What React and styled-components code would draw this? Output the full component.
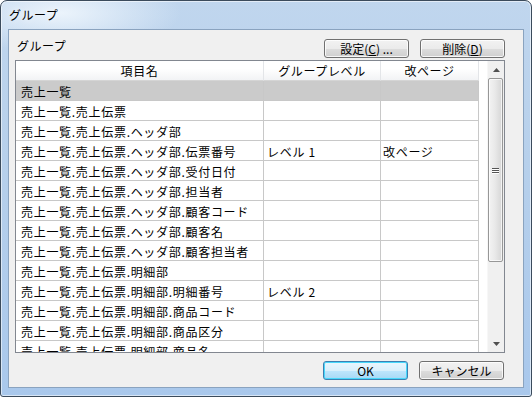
import React from 'react';
import styled, { createGlobalStyle } from 'styled-components';

const rows = [
  { name: '売上一覧', level: '', page: '', selected: true },
  { name: '売上一覧.売上伝票', level: '', page: '' },
  { name: '売上一覧.売上伝票.ヘッダ部', level: '', page: '' },
  { name: '売上一覧.売上伝票.ヘッダ部.伝票番号', level: 'レベル 1', page: '改ページ' },
  { name: '売上一覧.売上伝票.ヘッダ部.受付日付', level: '', page: '' },
  { name: '売上一覧.売上伝票.ヘッダ部.担当者', level: '', page: '' },
  { name: '売上一覧.売上伝票.ヘッダ部.顧客コード', level: '', page: '' },
  { name: '売上一覧.売上伝票.ヘッダ部.顧客名', level: '', page: '' },
  { name: '売上一覧.売上伝票.ヘッダ部.顧客担当者', level: '', page: '' },
  { name: '売上一覧.売上伝票.明細部', level: '', page: '' },
  { name: '売上一覧.売上伝票.明細部.明細番号', level: 'レベル 2', page: '' },
  { name: '売上一覧.売上伝票.明細部.商品コード', level: '', page: '' },
  { name: '売上一覧.売上伝票.明細部.商品区分', level: '', page: '' },
  { name: '売上一覧.売上伝票.明細部.商品名', level: '', page: '' }
];

const Global = createGlobalStyle`
  html, body {
    margin: 0;
    padding: 0;
    background: #ffffff;
  }
  body {
    font-family: "Noto Sans CJK JP", "Noto Sans", sans-serif;
    font-size: 12px;
    color: #000;
  }
`;

const Arrow = ({ down }) => (
  <svg width="7" height="4" viewBox="0 0 7 4">
    <polygon
      points={down ? '0,0 7,0 3.5,4' : '3.5,0 7,4 0,4'}
      fill="#505050"
    />
  </svg>
);

export default function App() {
  return (
    <>
      <Global />
      <Window>
        <TitleBar>グループ</TitleBar>
        <Client>
          <TopBar>
            <GroupLabel>グループ</GroupLabel>
            <ButtonRow>
              <Button>
                設定(<u>C</u>) ...
              </Button>
              <Button>
                削除(<u>D</u>)
              </Button>
            </ButtonRow>
          </TopBar>

          <Table>
            <Grid>
              <HeaderRow>
                <HeadCell width={248}>項目名</HeadCell>
                <HeadCell width={117}>グループレベル</HeadCell>
                <HeadCell width={98}>改ページ</HeadCell>
                <Filler />
              </HeaderRow>
              {rows.map((r, i) => (
                <Row key={i}>
                  <Cell width={248} pad={5} selected={r.selected}>
                    {r.name}
                  </Cell>
                  <Cell width={117} pad={3} selected={r.selected}>
                    {r.level}
                  </Cell>
                  <Cell width={98} pad={2} selected={r.selected}>
                    {r.page}
                  </Cell>
                  <Filler />
                </Row>
              ))}
            </Grid>
            <ScrollBar>
              <ScrollButton>
                <Arrow />
              </ScrollButton>
              <Track>
                <Thumb>
                  <Grip>
                    <span />
                    <span />
                    <span />
                  </Grip>
                </Thumb>
              </Track>
              <ScrollButton>
                <Arrow down />
              </ScrollButton>
            </ScrollBar>
          </Table>

          <BottomBar>
            <Button primary>OK</Button>
            <Button>キャンセル</Button>
          </BottomBar>
        </Client>
      </Window>
    </>
  );
}

const Window = styled.div`
  box-sizing: border-box;
  width: 532px;
  height: 397px;
  border: 1px solid #3b4b5c;
  border-radius: 7px 7px 3px 3px;
  box-shadow: inset 0 0 0 1px rgba(255, 255, 255, 0.55);
  background:
    radial-gradient(ellipse 120px 40px at 60px 12px, rgba(240, 247, 253, 0.9), rgba(240, 247, 253, 0) 100%),
    linear-gradient(180deg, #c0d6ee 0%, #b7d0eb 40%, #a9c8ec 100%);
  padding: 0 7px 8px 7px;
  display: flex;
  flex-direction: column;
`;

const TitleBar = styled.div`
  height: 28px;
  display: flex;
  align-items: center;
  padding-left: 1px;
  padding-bottom: 2px;
  box-sizing: border-box;
  font-size: 12px;
  letter-spacing: 0.5px;
  color: #000;
  text-shadow: 0 0 6px rgba(255, 255, 255, 0.9);
`;

const Client = styled.div`
  flex: 1;
  box-sizing: border-box;
  background: #f0f0f0;
  border: 1px solid #8aa3bf;
  padding: 9px 18px 0 6px;
  display: flex;
  flex-direction: column;
`;

const TopBar = styled.div`
  display: flex;
  justify-content: space-between;
  align-items: flex-start;
  height: 19px;
`;

const GroupLabel = styled.div`
  margin-left: 2px;
  line-height: 13px;
  font-size: 12px;
  letter-spacing: 0.5px;
`;

const ButtonRow = styled.div`
  display: flex;
  gap: 11px;
`;

const Button = styled.div`
  box-sizing: border-box;
  width: 85px;
  height: 19px;
  border: 1px solid ${p => (p.primary ? '#3c7fb1' : '#707070')};
  border-radius: 3px;
  box-shadow: inset 0 0 0 1px ${p => (p.primary ? '#48d8fb' : 'rgba(255,255,255,0.8)')};
  background: ${p =>
    p.primary
      ? 'linear-gradient(180deg, #eaf6fd 0%, #d9f0fc 50%, #bee6fd 51%, #a7d9f5 100%)'
      : 'linear-gradient(180deg, #f2f2f2 0%, #ebebeb 50%, #dddddd 51%, #cfcfcf 100%)'};
  display: flex;
  align-items: center;
  justify-content: center;
  font-size: 12px;
  line-height: 12px;
  padding-top: 1px;
  u {
    text-underline-offset: 1px;
  }
`;

const Table = styled.div`
  box-sizing: border-box;
  margin-top: 2px;
  height: 293px;
  border: 1px solid #828790;
  background: #ffffff;
  display: flex;
  overflow: hidden;
`;

const Grid = styled.div`
  flex: 1;
  overflow: hidden;
  display: flex;
  flex-direction: column;
`;

const HeaderRow = styled.div`
  display: flex;
  flex: none;
  height: 20px;
`;

const HeadCell = styled.div`
  box-sizing: border-box;
  width: ${p => p.width}px;
  flex: none;
  height: 20px;
  border-right: 1px solid #e3e5e8;
  border-bottom: 1px solid #d5d5d5;
  background: linear-gradient(180deg, #ffffff 0%, #ffffff 40%, #f2f3f5 100%);
  display: flex;
  align-items: center;
  justify-content: center;
  font-size: 12px;
  letter-spacing: 0.6px;
`;

const Row = styled.div`
  display: flex;
  flex: none;
  height: 20px;
`;

const Cell = styled.div`
  box-sizing: border-box;
  width: ${p => p.width}px;
  flex: none;
  height: 20px;
  border-right: 1px solid #c8c8c8;
  border-bottom: 1px solid #c8c8c8;
  background: ${p => (p.selected ? '#cbcbcb' : '#ffffff')};
  padding: 1px ${p => p.pad}px 0;
  display: flex;
  align-items: center;
  white-space: nowrap;
  overflow: hidden;
  font-size: 12px;
  letter-spacing: 0.7px;
`;

const Filler = styled.div`
  flex: 1;
  background: #ffffff;
`;

const ScrollBar = styled.div`
  width: 17px;
  flex: none;
  background: #f0f0f0;
  border-left: 1px solid #f7f7f7;
  box-sizing: border-box;
  display: flex;
  flex-direction: column;
`;

const ScrollButton = styled.div`
  height: 17px;
  flex: none;
  display: flex;
  align-items: center;
  justify-content: center;
`;

const Track = styled.div`
  flex: 1;
  display: flex;
  flex-direction: column;
`;

const Thumb = styled.div`
  box-sizing: border-box;
  height: 184px;
  margin: 0 1px 0 0;
  border: 1px solid #979797;
  border-radius: 2px;
  box-shadow: inset 0 0 0 1px rgba(255, 255, 255, 0.7);
  background: linear-gradient(90deg, #f3f3f3 0%, #e9e9e9 45%, #d6d6d6 100%);
  display: flex;
  align-items: center;
  justify-content: center;
`;

const Grip = styled.div`
  display: flex;
  flex-direction: column;
  gap: 1px;
  span {
    display: block;
    width: 7px;
    height: 1px;
    background: #555;
    box-shadow: 0 1px 0 #fff;
  }
`;

const BottomBar = styled.div`
  display: flex;
  justify-content: flex-end;
  gap: 11px;
  margin-top: 8px;
  margin-right: 1px;
`;
